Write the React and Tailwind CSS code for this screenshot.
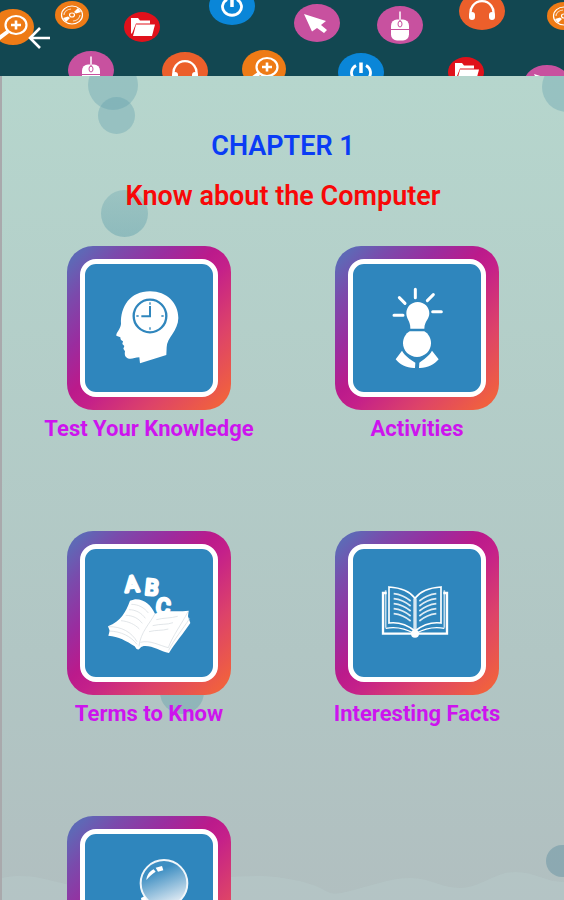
const Lens = () => (
  <g fill="none" stroke="#fff" strokeWidth="2.200">
    <ellipse cx="3" cy="-2" rx="10.500" ry="9" />
    <path d="M-2 -2h10M3 -6.500v9" strokeWidth="2.600" />
    <path d="M-5 4.500L-15 12" strokeWidth="4" />
  </g>
);

const Disc = () => (
  <g fill="none" stroke="#fff" strokeWidth="1.200">
    <ellipse rx="10.500" ry="9" />
    <ellipse rx="2.500" ry="2" />
    <path d="M-8 0a8 6.500 0 0 1 7 -6M8 0a8 6.500 0 0 1 -7 6" opacity="0.700" />
    <path d="M2 -3L6 -7L9 -3L4 -1.500zM-2 3L-6 7L-9 3L-4 1.500z" fill="#fff" stroke="none" />
  </g>
);

const Folder = () => (
  <g fill="#fff">
    <path d="M-11 -9h7l2 2.500h10v3h-14l-4 10h-1z" />
    <path d="M-6 -2.500h19l-3 11.500h-19z" />
  </g>
);

const Power = () => (
  <g fill="none" stroke="#fff" strokeWidth="2.800">
    <path d="M-5 -6.500a9.500 8.500 0 1 0 10 0" />
    <path d="M0 -9.500V1" strokeWidth="3.500" />
  </g>
);

const Pointer = () => (
  <path d="M-13 -9L9 -2L4 2L10 7L7 10L0 5L-5 8.500z" fill="#fff" />
);

const Mouse = () => (
  <g fill="none" stroke="#fff" strokeWidth="1.500">
    <path d="M0 -13.500v8" />
    <rect x="-9" y="-5.500" width="18" height="21" rx="6" fill="#fff" stroke="none" />
    <path d="M-9 4.500h18M0 -5V-3" stroke="#c8519f" strokeWidth="1" />
    <ellipse cy="-1" rx="2" ry="3" stroke="#c8519f" strokeWidth="1" />
  </g>
);

const Headphones = () => (
  <g fill="none" stroke="#fff" strokeWidth="2.300">
    <path d="M-11 5a11.500 11.500 0 1 1 22 0" />
    <rect x="-13" y="1" width="6" height="8" rx="3" fill="#fff" stroke="none" />
    <rect x="7" y="1" width="6" height="8" rx="3" fill="#fff" stroke="none" />
  </g>
);

const badges = [
  { x: 13, y: 27, rx: 21, ry: 18, color: "#ee7b16", Glyph: Lens },
  { x: 72, y: 15, rx: 17, ry: 14, color: "#ee7b16", Glyph: Disc },
  { x: 142, y: 27, rx: 18, ry: 15, color: "#e0111b", Glyph: Folder },
  { x: 232, y: 6, rx: 23, ry: 19, color: "#0a86d8", Glyph: Power },
  { x: 317, y: 23, rx: 23, ry: 19, color: "#c8519f", Glyph: Pointer },
  { x: 400, y: 25, rx: 23, ry: 19, color: "#c8519f", Glyph: Mouse },
  { x: 482, y: 11, rx: 23, ry: 19, color: "#ec5f2b", Glyph: Headphones },
  { x: 564, y: 16, rx: 17, ry: 14, color: "#ee7b16", Glyph: Disc },
  { x: 91, y: 70, rx: 23, ry: 19, color: "#c8519f", Glyph: Mouse },
  { x: 185, y: 71, rx: 23, ry: 19, color: "#ec5f2b", Glyph: Headphones },
  { x: 264, y: 69, rx: 22, ry: 19, color: "#ee7b16", Glyph: Lens },
  { x: 361, y: 72, rx: 23, ry: 19, color: "#0a86d8", Glyph: Power },
  { x: 466, y: 72, rx: 18, ry: 15, color: "#e0111b", Glyph: Folder },
  { x: 547, y: 83, rx: 23, ry: 18, color: "#c8519f", Glyph: Pointer },
];

const HeadClock = () => (
  <svg viewBox="0 0 384 384" className="w-full">
    <path
      fill="#fff"
      d="M195 82C246 82 280 118 280 162C280 200 245 222 245 250L244 273L165 298L163 280C150 280 142 286 132 284C120 282 118 272 120 262L115 254L118 246L112 240L114 232C108 230 106 226 106 220L94 215C92 208 106 196 108 180C106 128 135 82 195 82Z"
    />
    <g fill="none" stroke="#2f86bd" strokeWidth="7">
      <circle cx="195" cy="156" r="49" />
      <path d="M195 126V157H169" strokeWidth="6" />
      <path d="M195 115v7M195 190v7M154 156h7M229 156h7" strokeWidth="4" />
    </g>
  </svg>
);

const BulbPerson = () => (
  <svg viewBox="0 0 384 384" className="w-full">
    <g fill="#fff">
      <path d="M194 114C214 114 229 129 229 148C229 166 215 170 214 194H172C172 170 160 166 160 148C160 129 174 114 194 114Z" />
      <path d="M170 202H214C226 209 234 222 234 238C234 261 215 279 192 279C169 279 150 261 150 238C150 222 158 209 170 202Z" />
      <path d="M147 260C156 276 172 286 187 296L186 312C162 313 140 302 128 286Z" />
      <path d="M237 260C228 276 212 286 199 296L198 312C222 313 244 302 257 286Z" />
    </g>
    <path
      d="M187 76v25M139 101l17 17M241 92l-18 18M123 154h27M239 143h26"
      fill="none"
      stroke="#fff"
      strokeWidth="9"
      strokeLinecap="round"
    />
  </svg>
);

const LetterBook = () => (
  <svg viewBox="0 0 384 384" className="w-full">
    <path
      fill="#fff"
      d="M150 151C180 150 198 170 210 194C240 182 275 190 311 185L309 202L316 222C298 250 268 285 252 312C225 306 200 288 176 291Q168 292 162 301Q154 303 149 292C125 276 100 262 70 260L74 245L69 232C108 216 122 190 135 155Z"
    />
    <g fill="none" stroke="#d3dade" strokeWidth="2">
      <path d="M210 194C196 222 166 250 162 292M70 233C110 232 140 250 156 278M72 246C108 247 138 262 156 286M309 188C290 225 262 262 250 296C224 290 195 272 166 280M314 208C294 240 266 272 251 304" />
      <path d="M139 166C160 166 178 176 190 192M132 182C152 182 170 192 181 208M122 199C143 199 160 208 172 223M108 215C130 217 150 226 163 240" />
      <path d="M214 212C236 206 258 208 278 202M203 230C226 224 246 228 264 221M192 248C214 242 230 246 250 240" />
    </g>
    <g
      fill="#fff"
      stroke="#fff"
      strokeWidth="9"
      strokeLinejoin="round"
      textAnchor="middle"
      className="font-['Roboto','Liberation_Sans',sans-serif] text-[66px] font-normal"
    >
      <text x="141" y="128" transform="rotate(-4 141 105)">A</text>
      <text x="201" y="138" transform="rotate(6 201 114)">B</text>
      <text x="235" y="195" transform="rotate(8 235 171)">C</text>
    </g>
  </svg>
);

const OpenBook = () => (
  <svg viewBox="0 0 384 384" className="w-full">
    <g fill="none" stroke="#fff">
      <path d="M101 132H90V254H282V132H271" strokeWidth="7" />
      <path d="M98 124V236M274 124V236" strokeWidth="5" opacity="0.700" />
      <path
        d="M186 148C170 126 140 116 108 114V222C140 218 166 230 186 246C206 230 232 218 264 222V114C232 116 202 126 186 148Z"
        strokeWidth="5"
      />
      <path d="M186 148V246" strokeWidth="10" opacity="0.800" />
      <path d="M98 238C130 232 160 240 184 254M274 238C242 232 212 240 188 254" strokeWidth="4" />
      <path
        d="M122 134Q150 137 173 156M122 149Q150 152 173 171M122 164Q150 167 173 186M122 179Q150 182 173 201M122 194Q150 197 173 216M250 134Q222 137 199 156M250 149Q222 152 199 171M250 164Q222 167 199 186M250 179Q222 182 199 201M250 194Q222 197 199 216"
        strokeWidth="5"
        opacity="0.850"
      />
    </g>
    <circle cx="186" cy="254" r="12" fill="#fff" />
  </svg>
);

const CrystalBall = () => (
  <svg viewBox="0 0 384 384" className="w-full">
    <defs>
      <linearGradient id="ball" x1="0.200" y1="0" x2="0.600" y2="1">
        <stop offset="0.250" stopColor="#3d8ec2" />
        <stop offset="1" stopColor="#e6eef5" />
      </linearGradient>
    </defs>
    <circle cx="237" cy="148" r="70" fill="url(#ball)" stroke="#f0f6fa" strokeWidth="6" />
    <path d="M184 138C186 122 194 112 206 106L212 113C202 120 192 128 184 138Z" fill="#fff" />
    <path d="M212 101L231 96L235 109L219 113Z" fill="#fff" />
    <path d="M168 192L180 186L186 200H290L300 240H176Z" fill="#fff" />
  </svg>
);

const topics = [
  { label: "Test Your Knowledge", Icon: HeadClock },
  { label: "Activities", Icon: BulbPerson },
  { label: "Terms to Know", Icon: LetterBook },
  { label: "Interesting Facts", Icon: OpenBook },
  { label: "", Icon: CrystalBall },
];

const TopicCard = ({ label, Icon }) => (
  <button type="button" className="flex flex-col items-center">
    <span className="rounded-[26px] bg-[linear-gradient(135deg,#5f68b6_6%,#7a4bac_17%,#9a2d9f_32%,#bb1a8b_46%,#c4208a_54%,#dd4369_74%,#f0603f_94%)] p-[13px]">
      <span className="block w-[138px] rounded-[16px] border-[5px] border-white bg-[#2f86bd]">
        <Icon />
      </span>
    </span>
    <span className="mt-[5px] text-[22px] leading-7 font-bold whitespace-nowrap text-[#cd14ee]">
      {label}
    </span>
  </button>
);

const Bubbles = () => (
  <div className="pointer-events-none absolute inset-0 overflow-hidden">
    <div className="absolute -top-4 left-[86px] size-[50px] rounded-full bg-[#5f9fab]/35" />
    <div className="absolute top-[21px] left-[96px] size-[37px] rounded-full bg-[#5f9fab]/35" />
    <div className="absolute top-[114px] left-[99px] size-[47px] rounded-full bg-linear-to-b from-[#5f9fab]/30 to-[#5f9fab]/45" />
    <div className="absolute -top-[14px] -right-7 size-[50px] rounded-full bg-[#5f9fab]/35" />
    <div className="absolute top-[594px] left-[158px] size-[44px] rounded-full bg-[#5f9fab]/40" />
    <div className="absolute top-[769px] -right-[14px] size-[32px] rounded-full bg-[#5f8fa0]/45" />
    <svg
      viewBox="0 0 564 40"
      preserveAspectRatio="none"
      className="absolute bottom-0 h-10 w-full"
    >
      <path
        d="M0 18C40 10 60 30 110 30S230 10 282 18S320 38 345 32S390 18 410 18S440 28 460 28S495 12 515 12S545 22 564 22V40H0Z"
        fill="#b5c8c8"
        opacity="0.600"
      />
    </svg>
  </div>
);

const App = () => {
  return (
    <div className="flex h-screen flex-col font-['Roboto','Liberation_Sans',sans-serif]">
      {/* Header */}
      <header className="relative flex h-[76px] shrink-0 items-center overflow-hidden bg-[#124751] pl-[26px]">
        <svg
          viewBox="0 0 564 76"
          preserveAspectRatio="xMinYMin slice"
          className="absolute inset-0 h-full w-full"
        >
          {badges.map(({ x, y, rx, ry, color, Glyph }) => (
            <g key={`${x}-${y}`} transform={`translate(${x} ${y})`}>
              <ellipse rx={rx} ry={ry} fill={color} />
              <Glyph />
            </g>
          ))}
        </svg>
        <button type="button" aria-label="Back" className="relative">
          <svg viewBox="0 0 26 26" className="size-[26px]">
            <path
              d="M24 13H5M14 3L4 13L14 23"
              fill="none"
              stroke="#fff"
              strokeWidth="2.600"
            />
          </svg>
        </button>
      </header>

      {/* Chapter */}
      <main className="relative min-h-0 flex-1 overflow-hidden border-l-2 border-[#a9a9ac] bg-linear-to-b from-[#b6d6cd] via-[#b1c6c4] via-70% to-[#b1bfc0]">
        <Bubbles />
        <div className="relative px-[13px] pt-[45px]">
          <div className="text-center text-[27px] leading-[50px] font-semibold">
            <h1 className="text-[#0a3cf5]">CHAPTER 1</h1>
            <h2 className="text-[#f80808]">Know about the Computer</h2>
          </div>
          <div className="mt-[25px] grid grid-cols-2 gap-y-[88px]">
            {topics.map((topic, i) => (
              <TopicCard key={i} {...topic} />
            ))}
          </div>
        </div>
      </main>
    </div>
  );
};

export default App;
